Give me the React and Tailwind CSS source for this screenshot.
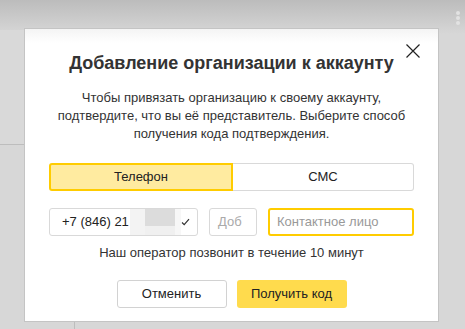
import React from 'react';

const font = { fontFamily: '"Liberation Sans", Arial, sans-serif' };

const CloseIcon = () => (
  <svg width="16" height="16" viewBox="0 0 16 16" className="text-[#222]">
    <path d="M1.5 1.5 L14.5 14.5 M14.5 1.5 L1.5 14.5" stroke="currentColor" strokeWidth="1.2" fill="none" />
  </svg>
);

const Check = () => (
  <svg width="9" height="8" viewBox="0 0 9 8">
    <path d="M1 4.5 L3.2 6.6 L8 1.2" stroke="#333" strokeWidth="1.2" fill="none" />
  </svg>
);

export default function App() {
  return (
    <div
      className="relative h-[329px] w-[465px] overflow-hidden bg-[#d7d7d7] pl-[24px] pt-[28px]"
      style={font}
    >
      {/* backdrop bits */}
      <div className="absolute inset-x-0 top-0 h-[34px] bg-gradient-to-b from-[#bcbcbc] to-[#d7d7d7]" />
      <div className="absolute left-0 top-[30px] h-[114px] w-[24px] bg-[#d9d9d9]" />
      <div className="absolute left-0 top-[144px] h-px w-[24px] bg-[#bdbdbd]" />
      <div className="absolute left-[74px] top-[321px] h-[8px] w-px bg-[#bdbdbd]" />
      <div className="absolute left-[456px] top-[11px] flex flex-col gap-[1px]">
        <span className="h-[4px] w-[4px] rounded-full bg-[#e2e2e2]" />
        <span className="h-[4px] w-[4px] rounded-full bg-[#e2e2e2]" />
        <span className="h-[4px] w-[4px] rounded-full bg-[#e2e2e2]" />
      </div>

      {/* modal */}
      <div className="relative flex h-[294px] w-[415px] flex-col items-center border border-[#c4c4c4] bg-white">
        <div className="absolute inset-x-0 top-0 h-[14px] bg-gradient-to-b from-[#f4f4f4] to-white" />
        <button className="absolute right-[17px] top-[14px]">
          <CloseIcon />
        </button>

        <h2 className="relative mt-[22px] text-[18px] font-bold leading-[24px] text-[#333]">
          Добавление организации к аккаунту
        </h2>

        <p className="mt-[14px] text-center text-[13px] leading-[18px] text-[#333]">
          Чтобы привязать организацию к своему аккаунту,
          <br />
          подтвердите, что вы её представитель. Выберите способ
          <br />
          получения кода подтверждения.
        </p>

        <div className="mt-[20px] flex h-[28px] w-[365px] text-[13px] text-[#222]">
          <div className="flex flex-1 items-center justify-center rounded-l-[3px] border-2 border-[#ffcc00] bg-[#ffeba0]">
            Телефон
          </div>
          <div className="flex flex-1 items-center justify-center rounded-r-[3px] border border-l-0 border-[#d9d9d9]">
            СМС
          </div>
        </div>

        <div className="mt-[17px] flex h-[28px] w-[365px] gap-[11px] text-[13px]">
          <div className="flex w-[149px] shrink-0 items-center overflow-hidden rounded-[3px] border border-[#d9d9d9] pl-[12px] pr-[8px] text-[#222]">
            <span className="shrink-0 whitespace-nowrap">+7 (846) 21</span>
            <span className="ml-[1px] flex h-full shrink-0 items-stretch">
              <span className="w-[15px] bg-[#f3f3f3]" />
              <span className="flex w-[30px] flex-col">
                <span className="h-[17px] bg-[#dcdcdc]" />
                <span className="flex-1 bg-[#f0f0f0]" />
              </span>
              <span className="w-[6px] bg-[#f7f7f7]" />
            </span>
            <span className="ml-auto shrink-0">
              <Check />
            </span>
          </div>
          <div className="flex w-[48px] shrink-0 items-center rounded-[3px] border border-[#d9d9d9] pl-[8px] text-[#aaa]">
            Доб
          </div>
          <div className="flex flex-1 items-center whitespace-nowrap rounded-[3px] border-2 border-[#ffcc00] pl-[7px] text-[#999]">
            Контактное лицо
          </div>
        </div>

        <p className="mt-[8px] text-[13px] leading-[18px] text-[#333]">
          Наш оператор позвонит в течение 10 минут
        </p>

        <div className="mt-[18px] flex gap-[10px] text-[13px] text-[#222]">
          <button className="h-[28px] w-[110px] rounded-[3px] border border-[#d2d2d2] bg-white">
            Отменить
          </button>
          <button className="h-[28px] w-[110px] rounded-[3px] bg-[#ffdb4d]">
            Получить код
          </button>
        </div>
      </div>
    </div>
  );
}
